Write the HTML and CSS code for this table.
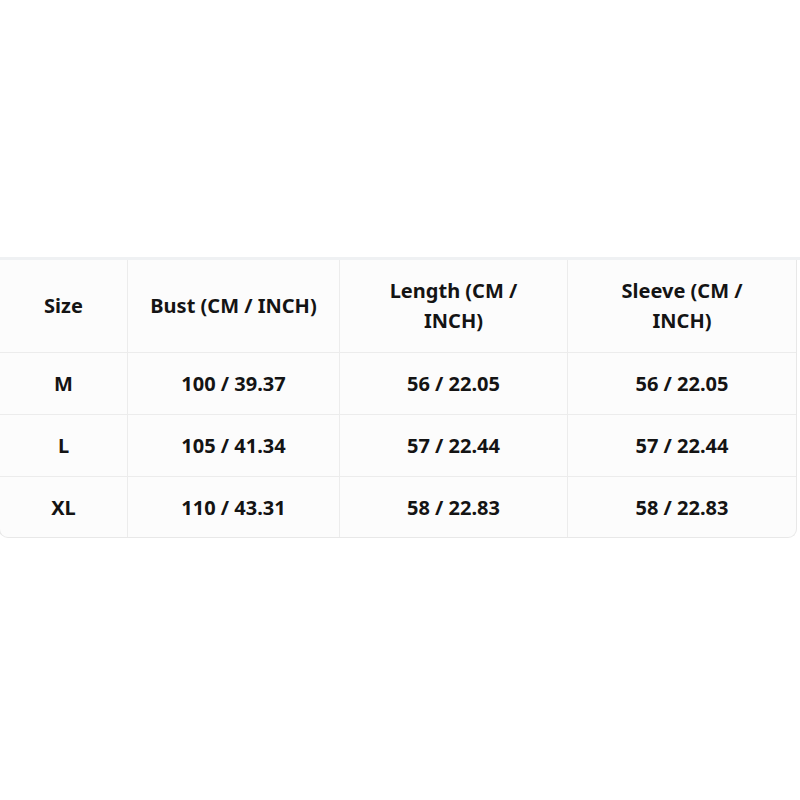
FILE: index.html
```html
<!DOCTYPE html>
<html>
<head>
<meta charset="utf-8">
<link rel="stylesheet" href="styles.css">
</head>
<body>
<div class="page">
  <div class="wrap">
    <table class="sizes">
      <colgroup>
        <col class="c1"><col class="c2"><col class="c3"><col class="c4">
      </colgroup>
      <thead>
        <tr><th>Size</th><th class="narrow">Bust (CM / INCH)</th><th class="wide">Length (CM / INCH)</th><th class="wide">Sleeve (CM / INCH)</th></tr>
      </thead>
      <tbody>
        <tr><td>M</td><td>100 / 39.37</td><td>56 / 22.05</td><td>56 / 22.05</td></tr>
        <tr><td>L</td><td>105 / 41.34</td><td>57 / 22.44</td><td>57 / 22.44</td></tr>
        <tr><td>XL</td><td>110 / 43.31</td><td>58 / 22.83</td><td>58 / 22.83</td></tr>
      </tbody>
    </table>
  </div>
</div>
</body>
</html>
```
FILE: styles.css
```css
html, body {
  margin: 0;
  padding: 0;
  background: #ffffff;
}
.page {
  width: 800px;
  height: 800px;
  overflow: hidden;
  padding-top: 257px;
  box-sizing: border-box;
}
.wrap {
  border-top: 3px solid #eff1f3;
  width: 800px;
}
.sizes {
  margin-left: -1px;
  width: 797px;
  border-collapse: separate;
  border-spacing: 0;
  table-layout: fixed;
  background: #fcfcfc;
  border: 1px solid #e8e8e8;
  border-top: none;
  border-radius: 0 0 9px 9px;
  font-family: "Noto Sans", "Open Sans", sans-serif;
  font-weight: 700;
  font-size: 20px;
  color: #141414;
  text-align: center;
}
.c1 { width: 128px; }
.c2 { width: 212px; }
.c3 { width: 228px; }
.c4 { width: 228px; }
.sizes th, .sizes td {
  padding: 15.5px 8px;
  line-height: 30px;
  border-right: 1px solid #ececec;
  border-bottom: 1px solid #ececec;
  font-weight: 700;
}
.sizes th {
  padding: 16px 8px;
}
.sizes th.narrow {
  padding-left: 16px;
  padding-right: 16px;
}
.sizes th.wide {
  padding-left: 30px;
  padding-right: 30px;
}
.sizes th:last-child, .sizes td:last-child {
  border-right: none;
}
.sizes tbody tr:last-child td {
  border-bottom: none;
  padding-bottom: 14.5px;
}
```
